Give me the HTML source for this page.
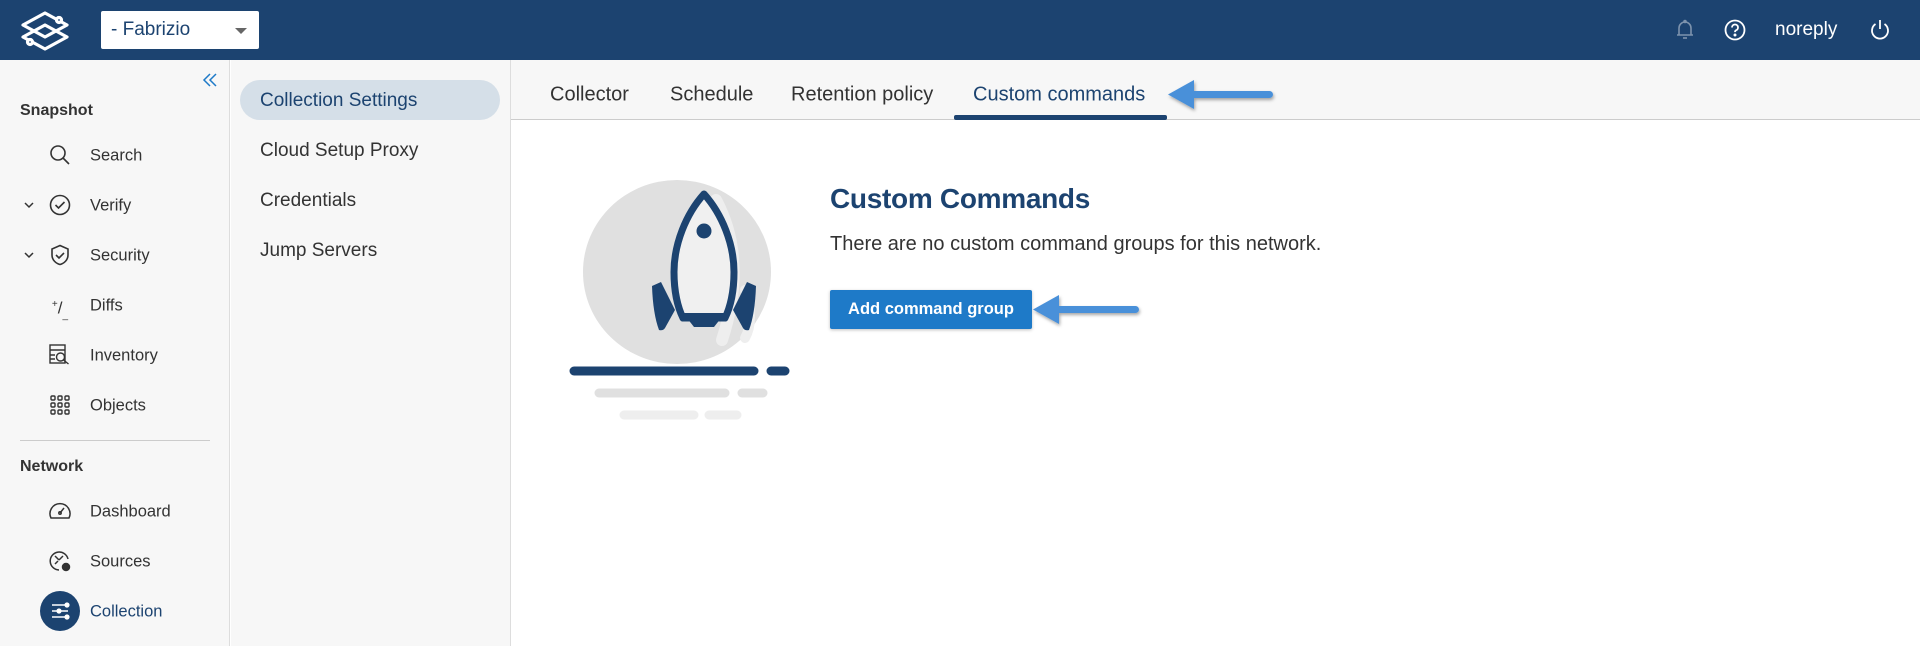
<!DOCTYPE html>
<html><head><meta charset="utf-8"><style>
*{margin:0;padding:0;box-sizing:border-box}
body{width:1920px;height:646px;overflow:hidden;font-family:"Liberation Sans",sans-serif;background:#fff;position:relative;color:#333}
.hdr{position:absolute;left:0;top:0;width:1920px;height:60px;background:#1c4370}
.dd{position:absolute;left:101px;top:11px;width:158px;height:38px;background:#fff;border-radius:2px;color:#1c4370;font-size:19px;line-height:38px;padding-left:10px}
.dd:after{content:"";position:absolute;right:12px;top:17px;border-left:6px solid transparent;border-right:6px solid transparent;border-top:6px solid #666}
.side{position:absolute;left:0;top:60px;width:230px;height:586px;background:#f7f7f7;border-right:1px solid #ddd}
.p2{position:absolute;left:231px;top:60px;width:280px;height:586px;background:#f7f7f7;border-right:1px solid #ddd}
.sec{position:absolute;left:20px;font-weight:bold;font-size:16px;color:#333}
.it{position:absolute;left:90px;font-size:16.5px;color:#333;transform:translateY(-50%)}
.ic{position:absolute;left:48px;width:24px;height:24px;transform:translateY(-50%)}
.p2i{position:absolute;left:29px;font-size:19px;color:#333;transform:translateY(-50%)}
.tabs{position:absolute;left:511px;top:60px;width:1409px;height:60px;background:#f7f7f7;border-bottom:1px solid #ccc}
.tab{position:absolute;top:95px;font-size:20px;color:#333;transform:translateY(-50%)}
</style></head><body>
<div class="hdr">
<svg style="position:absolute;left:19px;top:10px" width="52" height="42" viewBox="0 0 52 42" fill="none" stroke="#fff" stroke-width="3.2" stroke-linejoin="round">
<path d="M4 15 L26 3 L48 15 L26 27 Z"/><path d="M4 27 L26 15 L48 27 L26 39 Z"/>
<circle cx="40" cy="10" r="2.5" fill="#1c4370"/><circle cx="11" cy="32" r="2.5" fill="#1c4370"/></svg>
<div class="dd">- Fabrizio</div>
<svg style="position:absolute;left:1675px;top:19px" width="20" height="22" viewBox="0 0 20 22" fill="none" stroke="#7d93ad" stroke-width="1.6"><path d="M4 16 V9 a6 6 0 0 1 12 0 V16 H2 H18"/><path d="M8 19 h4"/><circle cx="10" cy="2.5" r="1" fill="#7d93ad"/></svg>
<svg style="position:absolute;left:1724px;top:19px" width="22" height="22" viewBox="0 0 22 22" fill="none" stroke="#fff" stroke-width="1.8"><circle cx="11" cy="11" r="9.5"/><path d="M8 8.5 a3 3 0 1 1 4 2.8 q-1 .5-1 1.8"/><circle cx="11" cy="16" r=".6" fill="#fff"/></svg>
<div style="position:absolute;left:1775px;top:19px;color:#fff;font-size:19px">noreply</div>
<svg style="position:absolute;left:1869px;top:19px" width="22" height="22" viewBox="0 0 22 22" fill="none" stroke="#fff" stroke-width="1.8"><path d="M6.5 5 a8 8 0 1 0 9 0"/><path d="M11 1 v9"/></svg>
</div>
<div class="side">
<svg style="position:absolute;left:202px;top:12px" width="16" height="16" viewBox="0 0 16 16" fill="none" stroke="#1e7ac8" stroke-width="1.5"><path d="M8 2 L2 8 L8 14 M14 2 L8 8 L14 14"/></svg>
<div class="sec" style="top:42px">Snapshot</div>
<svg class="ic" style="top:95px" viewBox="0 0 24 24" fill="none" stroke="#333" stroke-width="1.6"><circle cx="10" cy="10" r="7"/><path d="M15 15 l6 6"/></svg><div class="it" style="top:96px">Search</div>
<svg style="position:absolute;left:23px;top:140px" width="12" height="10" viewBox="0 0 12 10" fill="none" stroke="#333" stroke-width="1.5"><path d="M2 3 l4 4 l4-4"/></svg>
<svg class="ic" style="top:145px" viewBox="0 0 24 24" fill="none" stroke="#333" stroke-width="1.6"><circle cx="12" cy="12" r="9.5"/><path d="M7.5 12 l3 3 l6-6"/></svg><div class="it" style="top:146px">Verify</div>
<svg style="position:absolute;left:23px;top:190px" width="12" height="10" viewBox="0 0 12 10" fill="none" stroke="#333" stroke-width="1.5"><path d="M2 3 l4 4 l4-4"/></svg>
<svg class="ic" style="top:195px" viewBox="0 0 24 24" fill="none" stroke="#333" stroke-width="1.6"><path d="M12 2.5 L20 6 V12 C20 17 16 20.5 12 21.5 C8 20.5 4 17 4 12 V6 Z"/><path d="M8 12 l3 3 l5-5"/></svg><div class="it" style="top:196px">Security</div>
<div class="ic" style="top:245px;font-size:17px;line-height:24px;color:#333;text-align:center"><sup style="font-size:10px">+</sup>/<sub style="font-size:10px">_</sub></div><div class="it" style="top:246px">Diffs</div>
<svg class="ic" style="top:295px" viewBox="0 0 24 24" fill="none" stroke="#333" stroke-width="1.4"><rect x="2" y="2" width="15" height="18"/><path d="M2 7 h15 M2 12 h5 M2 16 h5"/><circle cx="12.5" cy="14" r="4"/><path d="M15.5 17 l5 4"/></svg><div class="it" style="top:296px">Inventory</div>
<svg class="ic" style="top:345px" viewBox="0 0 24 24" fill="none" stroke="#333" stroke-width="1.4"><g id="r"><rect x="3" y="3" width="4" height="4" rx="1"/><rect x="10" y="3" width="4" height="4" rx="1"/><rect x="17" y="3" width="4" height="4" rx="1"/></g><use href="#r" y="7"/><use href="#r" y="14"/></svg><div class="it" style="top:346px">Objects</div>
<div style="position:absolute;left:20px;top:380px;width:190px;height:1px;background:#ccc"></div>
<div class="sec" style="top:398px">Network</div>
<svg class="ic" style="top:451px" viewBox="0 0 24 24" fill="none" stroke="#333" stroke-width="1.5"><path d="M3 19 A10 10 0 1 1 21 19 Z"/><path d="M12 14 l4-5"/><circle cx="12" cy="14" r="1.2"/></svg><div class="it" style="top:452px">Dashboard</div>
<svg class="ic" style="top:501px" viewBox="0 0 24 24" fill="none" stroke="#333" stroke-width="1.5"><path d="M20 10 A9 9 0 1 0 11 21"/><path d="M7 7 l4 4 M15 7 l-4 4 M7 15 l3-3"/><circle cx="18" cy="18" r="3.5" fill="#333"/></svg><div class="it" style="top:502px">Sources</div>
<div style="position:absolute;left:40px;top:531px;width:40px;height:40px;border-radius:50%;background:#1c4370"></div>
<svg style="position:absolute;left:48px;top:539px" width="24" height="24" viewBox="0 0 24 24" fill="none" stroke="#fff" stroke-width="1.6"><path d="M4 6 h14 M4 12 h16 M4 18 h14"/><circle cx="19" cy="6" r="1.8" fill="#fff"/><circle cx="11" cy="12" r="1.8" fill="#fff"/><circle cx="19" cy="18" r="1.8" fill="#fff"/></svg>
<div class="it" style="top:552px;color:#1c4370">Collection</div>
</div>
<div class="p2">
<div style="position:absolute;left:9px;top:20px;width:260px;height:40px;border-radius:20px;background:#d5dfe8"></div>
<div class="p2i" style="top:41px;color:#1c4370">Collection Settings</div>
<div class="p2i" style="top:91px">Cloud Setup Proxy</div>
<div class="p2i" style="top:141px">Credentials</div>
<div class="p2i" style="top:191px">Jump Servers</div>
</div>
<div class="tabs"></div>
<div class="tab" style="left:550px">Collector</div>
<div class="tab" style="left:670px">Schedule</div>
<div class="tab" style="left:791px">Retention policy</div>
<div class="tab" style="left:973px;color:#1c4370">Custom commands</div>
<div style="position:absolute;left:954px;top:115px;width:213px;height:5px;background:#1c4370;border-radius:2px"></div>
<svg style="position:absolute;left:0;top:0" width="1920" height="646" fill="none">
<defs><filter id="s"><feDropShadow dx="1" dy="2" stdDeviation="1.5" flood-opacity=".35"/></filter></defs>
<g filter="url(#s)" fill="#4a90d9"><rect x="1183" y="91" width="90" height="7" rx="3.5"/><path d="M1168 94.5 L1194 80 L1194 109 Z"/>
<rect x="1048" y="306" width="91" height="7" rx="3.5"/><path d="M1033 309.5 L1059 295 L1059 324 Z"/></g>
<ellipse cx="677" cy="272" rx="94" ry="92" fill="#e0e0e0"/>
<path d="M716 200 q32 60 6 140" stroke="#eee" stroke-width="12" stroke-linecap="round"/>
<path d="M745 290 q10 30 0 48" stroke="#eee" stroke-width="10" stroke-linecap="round"/>
<path d="M704 194 C686 214 674 244 674 272 C674 292 678 308 683 318 H725 C730 308 734 292 734 272 C734 244 722 214 704 194Z" fill="#f0f0f0" stroke="#1c4370" stroke-width="7" stroke-linejoin="round"/>
<circle cx="704" cy="231" r="7.5" fill="#1c4370"/>
<path d="M661 282 l-9 4 q1 28 7 44 q4 1 6-2 l10-18 z" fill="#1c4370"/>
<path d="M747 282 l9 4 q-1 28-7 44 q-4 1-6-2 l-10-18 z" fill="#1c4370"/>
<path d="M683 313 h42 l-11 14 h-20 z" fill="#1c4370"/>
<path d="M574 371 h180 M771 371 h14" stroke="#1c4370" stroke-width="9" stroke-linecap="round"/>
<path d="M599 393 h126 M742 393 h21" stroke="#e0e0e0" stroke-width="9" stroke-linecap="round"/>
<path d="M624 415 h70 M709 415 h28" stroke="#eee" stroke-width="9" stroke-linecap="round"/>
</svg>
<div style="position:absolute;left:830px;top:183px;font-size:28px;font-weight:bold;color:#1c4370;letter-spacing:-.3px">Custom Commands</div>
<div style="position:absolute;left:830px;top:233px;font-size:20px;color:#333">There are no custom command groups for this network.</div>
<div style="position:absolute;left:830px;top:290px;width:202px;height:39px;background:#1e7ac8;border-radius:2px;color:#fff;font-size:16.5px;font-weight:bold;line-height:39px;text-align:center;box-shadow:0 1px 3px rgba(0,0,0,.25)">Add command group</div>
</body></html>
